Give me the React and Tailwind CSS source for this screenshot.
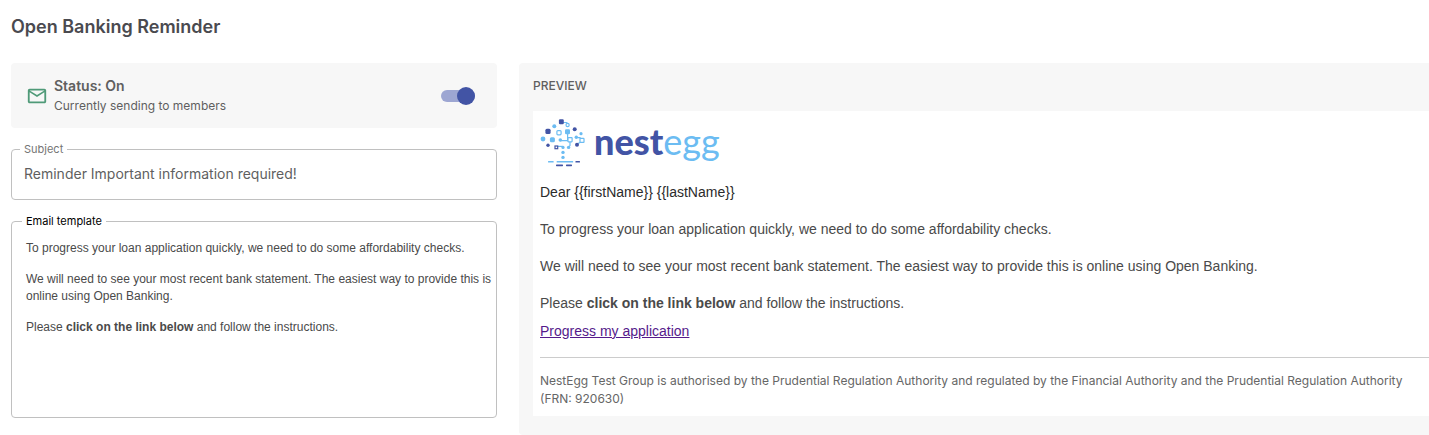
import React, { useState } from 'react';
import { MdMailOutline } from 'react-icons/md';

/**
 * Tree drawing of the NestEgg logo
 */
const TreeMark = () => (
  <svg className="w-[46px] h-12 shrink-0" viewBox="5 6 46 48" aria-hidden="true">
    <g fill="none" stroke="#6cbcf2" strokeWidth="1.2">
      <path d="M28 9.5h3.5l1 1" />
      <circle cx="32.6" cy="12" r="1.6" />
      <rect x="21.9" y="17.6" width="4.2" height="4.2" rx="1" />
      <path d="M32.6 20v7.5M25.3 27.6h7.5M35 29v3.5l-1.2 1.5" />
      <rect x="32.9" y="24.6" width="4.2" height="4.2" rx="0.5" />
      <path d="M42.5 24.6h2.5v1M43 30.5l2-1" />
      <rect x="45" y="25.4" width="4" height="4" rx="0.5" />
      <path d="M22.8 33.4h5" />
    </g>
    <g fill="#6cbcf2">
      <circle cx="19.3" cy="13.3" r="2" />
      <rect x="30" y="16.2" width="5" height="5" rx="1.2" />
      <circle cx="46" cy="20.7" r="1.6" />
      <circle cx="41.3" cy="24.3" r="1.7" />
      <circle cx="8" cy="26" r="2.4" />
      <rect x="14.9" y="24.2" width="5" height="5" rx="1.5" />
      <circle cx="25.3" cy="27" r="1.8" />
      <circle cx="28" cy="34.4" r="1.6" />
      <circle cx="33.6" cy="34.4" r="1.7" />
      <circle cx="28" cy="39.4" r="1.7" />
      <circle cx="28" cy="44.4" r="1.7" />
      <rect x="13" y="47.9" width="5.7" height="1.7" rx="0.6" />
      <rect x="21.6" y="47.9" width="16.6" height="1.7" rx="0.6" />
    </g>
    <g fill="#4254a5">
      <rect x="23.9" y="6.3" width="4.9" height="4.9" rx="1.2" />
      <rect x="10.4" y="15.8" width="5.2" height="5.2" rx="1.5" />
      <circle cx="39.7" cy="16.3" r="2" />
      <circle cx="13" cy="32.3" r="1.7" />
      <circle cx="42" cy="31.7" r="2" />
      <rect x="40.4" y="47.9" width="4.6" height="1.7" rx="0.6" />
      <rect x="21" y="51.5" width="7" height="1.7" rx="0.6" />
      <rect x="31" y="51.5" width="6" height="1.7" rx="0.6" />
    </g>
    <rect x="20" y="33" width="2.7" height="2.7" fill="none" stroke="#4254a5" strokeWidth="1.2" />
  </svg>
);

const Logo = () => (
  <div className="flex items-start gap-2" role="img" aria-label="nestegg">
    <TreeMark />
    <span className="font-['Lato',sans-serif] text-[36px] leading-[44px] text-[#6cbcf2] font-normal">
      <span className="font-black text-[#4254a5]">nest</span>egg
    </span>
  </div>
);

/**
 * Status card with the on/off switch
 */
const StatusCard = ({ enabled, onToggle }) => (
  <section className="flex items-center justify-between rounded bg-[#f7f7f7] pb-3 pl-[15px] pr-[22px] pt-[13px]">
    <div className="flex items-center gap-1.5">
      <MdMailOutline className="size-[22px] text-[#4f9a78]" aria-hidden="true" />
      <div className="text-[#5f5f5f]">
        <h2 className="text-sm leading-5 font-semibold">Status: {enabled ? 'On' : 'Off'}</h2>
        <p className="text-xs leading-5">
          {enabled ? 'Currently sending to members' : 'Not sending to members'}
        </p>
      </div>
    </div>
    <label className="relative flex h-[18px] w-[34px] cursor-pointer items-center">
      <input
        type="checkbox"
        role="switch"
        className="peer sr-only"
        aria-label="Send reminder to members"
        checked={enabled}
        onChange={onToggle}
      />
      <span className="h-3 w-full rounded-full bg-gray-300 peer-checked:bg-[#9da6d2]" />
      <span className="absolute left-0 size-[18px] rounded-full bg-gray-50 peer-checked:left-4 peer-checked:bg-[#4254a5]" />
    </label>
  </section>
);

// Body copy shared by the editor and the preview
const EmailBody = () => (
  <>
    <p>To progress your loan application quickly, we need to do some affordability checks.</p>
    <p>
      We will need to see your most recent bank statement. The easiest way to provide this is
      online using Open Banking.
    </p>
    <p>
      Please <strong className="font-bold">click on the link below</strong> and follow the
      instructions.
    </p>
  </>
);

const Preview = () => (
  <section className="rounded-l bg-[#f7f7f7] pb-[19px] pl-[14px] pt-[13px]">
    <h2 className="text-xs leading-5 font-medium text-[#5f5f5f]">PREVIEW</h2>
    <div className="mt-[15px] bg-white pb-2 pl-[7px] pt-2">
      <Logo />
      <div className="mt-4 font-['Liberation_Sans',sans-serif] text-sm leading-[18px] text-[#4a4a4a]">
        <p className="mb-[19px] text-[#2b2b2b]">{'Dear {{firstName}} {{lastName}}'}</p>
        <div className="flex flex-col gap-[19px]">
          <EmailBody />
        </div>
        <a href="#application" className="mt-2.5 inline-block text-[#551a8b] underline">
          Progress my application
        </a>
      </div>
      <hr className="mt-[17px] border-[#cccccc]" />
      <p className="mt-[14px] text-xs leading-[18px] text-[#666666]">
        NestEgg Test Group is authorised by the Prudential Regulation Authority and regulated by
        the Financial Authority and the Prudential Regulation Authority (FRN: 920630)
      </p>
    </div>
  </section>
);

const App = () => {
  const [enabled, setEnabled] = useState(true);
  const [subject, setSubject] = useState('Reminder Important information required!');

  return (
    <main className="bg-white pl-[11px] pt-[13px] font-['Inter',sans-serif]">
      <h1 className="text-lg leading-7 font-semibold text-[#4a4a4f]">Open Banking Reminder</h1>

      <div className="mt-[22px] grid grid-cols-[486fr_910fr] gap-[22px]">
        <div>
          <StatusCard enabled={enabled} onToggle={() => setEnabled(!enabled)} />

          <fieldset className="mt-[13px] rounded border border-[#c0c0c0] px-1">
            <legend className="ml-1 px-1 text-[11px] leading-4 text-[#757575]">
              <label htmlFor="subject">Subject</label>
            </legend>
            <input
              id="subject"
              type="text"
              className="mb-[10px] mt-0.5 block w-full px-2 text-sm leading-[30px] text-[#5f5f5f] outline-none"
              value={subject}
              onChange={(e) => setSubject(e.target.value)}
            />
          </fieldset>

          <fieldset className="mt-[13px] rounded border border-[#c0c0c0] pl-[14px] pr-1">
            <legend
              id="template-label"
              className="-ml-1 px-1 text-[11px] leading-4 text-black"
            >
              Email template
            </legend>
            <div
              role="textbox"
              aria-multiline="true"
              aria-labelledby="template-label"
              contentEditable
              suppressContentEditableWarning
              className="flex min-h-[188px] flex-col gap-[14px] pt-[11px] font-['Liberation_Sans',sans-serif] text-xs leading-[17px] text-[#4a4a4a] outline-none"
            >
              <EmailBody />
            </div>
          </fieldset>
        </div>

        <Preview />
      </div>
    </main>
  );
};

export default App;
